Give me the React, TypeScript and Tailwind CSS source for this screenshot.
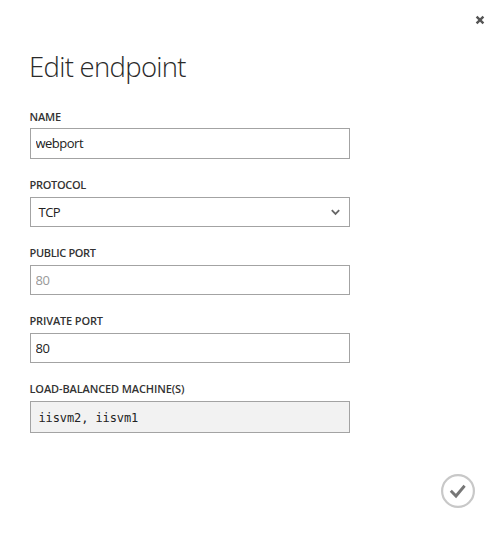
import type { ReactNode } from "react";

function Field({ label, labelClass, children }: { label: string; labelClass: string; children: ReactNode }) {
  return (
    <div className="flex h-[68px] w-[320px] flex-col">
      <div className="h-[17px] text-[11px] leading-[12px] font-semibold whitespace-nowrap text-[#333]">
        <span className={labelClass}>{label}</span>
      </div>
      {children}
    </div>
  );
}

const inputClass =
  "w-full shrink-0 border border-[#a3a3a3] bg-white px-[5px] text-[13px] outline-none";

export default function App() {
  return (
    <main className="flex h-[533px] w-[500px] flex-col bg-white font-['Open_Sans','Noto_Sans',sans-serif] text-[#333]">
      <header className="flex h-[44px] justify-end pt-[15px] pr-[15px]">
        <button aria-label="Close" className="size-[10px]">
          <svg viewBox="0 0 10 10" className="block size-[10px]" fill="none" stroke="#555" strokeWidth="2.4">
            <path d="M1.6 1.6 8.4 8.4M8.4 1.6 1.6 8.4" />
          </svg>
        </button>
      </header>
      <h1 className="h-[67px] pl-[29px] text-[27.5px] leading-[45px] font-light tracking-[-0.7px] whitespace-nowrap text-[#2a2a2a]">
        Edit endpoint
      </h1>
      <form className="flex flex-col pl-[29.5px]">
        <Field label="NAME" labelClass="tracking-[-0.2px]">
          <input aria-label="Name" className={`${inputClass} h-[31px] pb-[2px] tracking-[-0.5px] text-[#222]`} defaultValue="webport" />
        </Field>
        <Field label="PROTOCOL" labelClass="tracking-[-0.3px]">
          <button
            type="button"
            className="mt-px flex h-[30px] w-full shrink-0 items-center justify-between border border-[#a3a3a3] bg-white pr-[9px] pl-[8px] text-[13px] text-[#222]"
          >
            <span className="pt-[2px] tracking-[-0.5px]">TCP</span>
            <svg viewBox="0 0 9 7" className="h-[7px] w-[9px]" fill="none" stroke="#666" strokeWidth="1.8">
              <path d="m.8 1.2 3.7 3.7 3.7-3.7" />
            </svg>
          </button>
        </Field>
        <Field label="PUBLIC PORT" labelClass="tracking-[-0.35px]">
          <input aria-label="Public port" readOnly className={`${inputClass} mt-px h-[30px] tracking-[-0.4px] text-[#999]`} defaultValue="80" />
        </Field>
        <Field label="PRIVATE PORT" labelClass="tracking-[-0.15px]">
          <input aria-label="Private port" className={`${inputClass} mt-px h-[30px] tracking-[-0.4px] text-[#222]`} defaultValue="80" />
        </Field>
        <Field label="LOAD-BALANCED MACHINE(S)" labelClass="tracking-[-0.12px]">
          <div className="mt-px flex h-[32px] shrink-0 items-center border border-[#a3a3a3] bg-[#f2f2f2] pt-[2px] pl-[8px] font-['DejaVu_Sans_Mono',monospace] text-[12px] tracking-[-0.1px] whitespace-pre text-[#222]">
            iisvm2, iisvm1
          </div>
        </Field>
      </form>
      <footer className="flex justify-end pt-[23px] pr-[25px]">
        <button aria-label="Complete" className="size-[34px]">
          <svg viewBox="0 0 34 34" className="block size-[34px]" fill="none">
            <circle cx="17" cy="17" r="15.9" stroke="#c8c8c8" strokeWidth="2.2" />
            <path d="m9.8 16.8 5.2 5.2L23.6 11.8" stroke="#777" strokeWidth="2.9" />
          </svg>
        </button>
      </footer>
    </main>
  );
}
